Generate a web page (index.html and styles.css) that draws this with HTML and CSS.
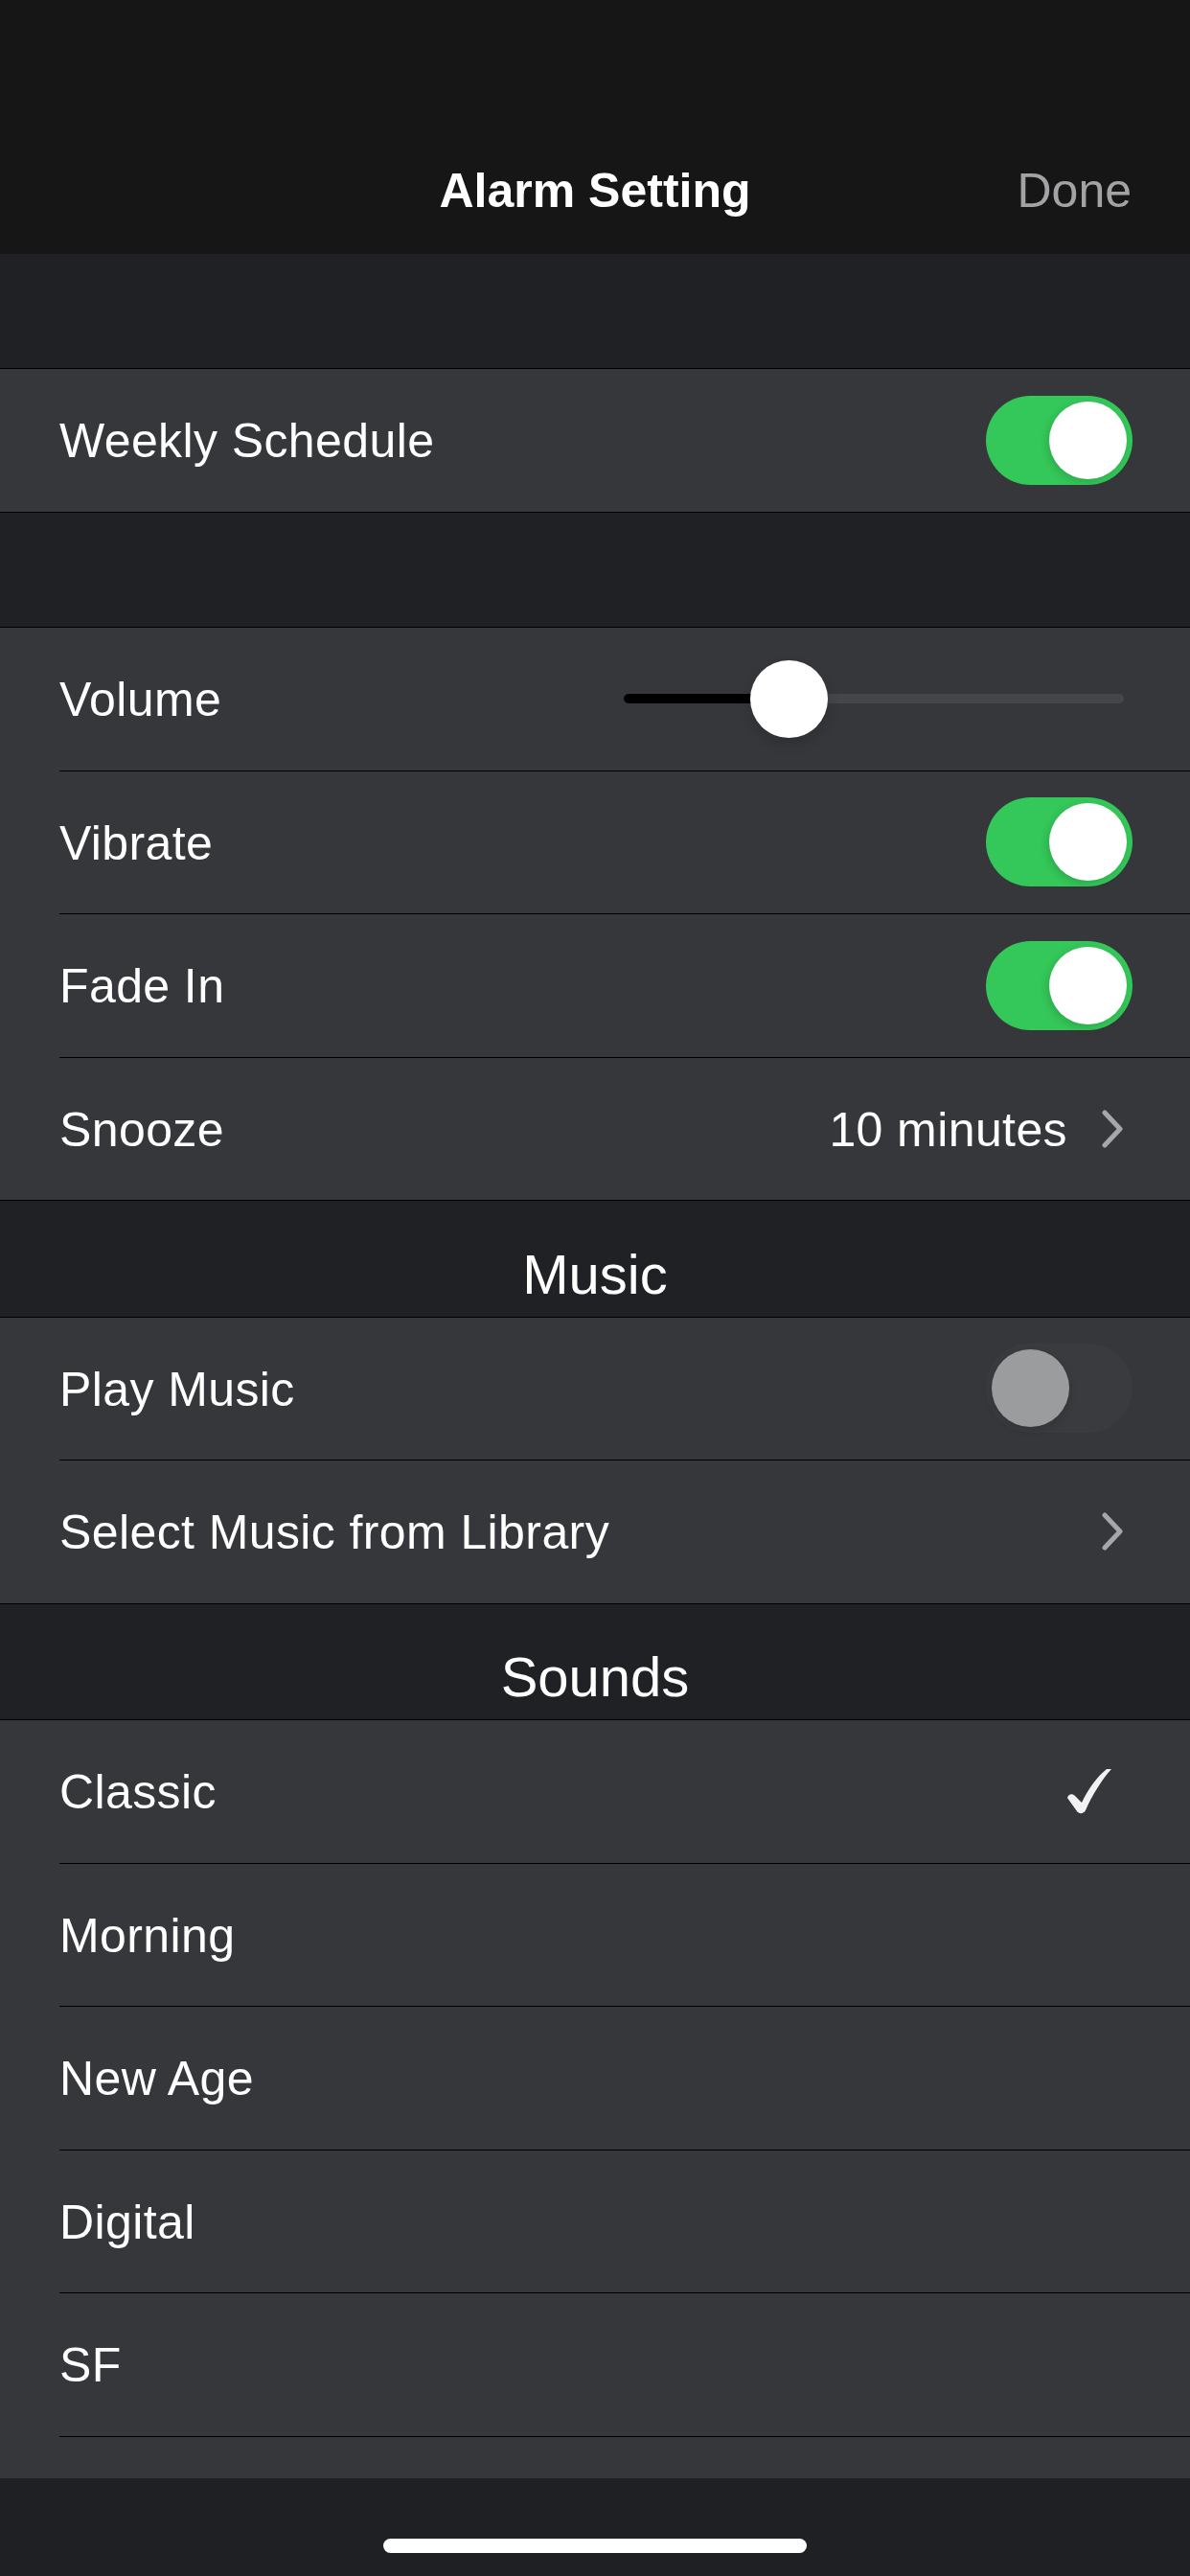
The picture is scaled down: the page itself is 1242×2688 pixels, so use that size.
FILE: index.html
```html
<!DOCTYPE html>
<html lang="en">
<head>
  <meta charset="UTF-8">
  <title>Alarm Setting</title>
  <meta name="viewport" content="width=device-width, initial-scale=1">
  <link rel="stylesheet" href="styles.css">
</head>
<body>
  <div class="screen">
    <header class="navbar">
      <div class="nav-content">
        <span></span>
        <span class="nav-title">Alarm Setting</span>
        <button class="nav-done">Done</button>
      </div>
    </header>

    <main class="content">
      <div class="spacer spacer-first"></div>
      <section class="group">
        <div class="row">
          <div class="row-inner">
            <span class="label">Weekly Schedule</span>
            <span class="switch on"></span>
          </div>
        </div>
      </section>

      <div class="spacer"></div>
      <section class="group">
        <div class="row">
          <div class="row-inner">
            <span class="label">Volume</span>
            <div class="slider">
              <div class="slider-track">
                <div class="slider-fill" style="width: 172px"></div>
              </div>
              <span class="slider-thumb" style="left: 132px"></span>
            </div>
          </div>
        </div>
        <div class="row">
          <div class="row-inner">
            <span class="label">Vibrate</span>
            <span class="switch on"></span>
          </div>
        </div>
        <div class="row">
          <div class="row-inner">
            <span class="label">Fade In</span>
            <span class="switch on"></span>
          </div>
        </div>
        <div class="row">
          <div class="row-inner">
            <span class="label">Snooze</span>
            <span class="detail">10 minutes</span>
            <svg class="chevron" viewBox="0 0 24 40" width="24" height="40">
              <polyline points="4,3 20,20 4,37" fill="none" stroke="#a6a7a9" stroke-width="5" stroke-linecap="round" stroke-linejoin="round"/>
            </svg>
          </div>
        </div>
      </section>

      <div class="section-header">Music</div>
      <section class="group">
        <div class="row">
          <div class="row-inner">
            <span class="label">Play Music</span>
            <span class="switch"></span>
          </div>
        </div>
        <div class="row">
          <div class="row-inner">
            <span class="label">Select Music from Library</span>
            <svg class="chevron" viewBox="0 0 24 40" width="24" height="40">
              <polyline points="4,3 20,20 4,37" fill="none" stroke="#a6a7a9" stroke-width="5" stroke-linecap="round" stroke-linejoin="round"/>
            </svg>
          </div>
        </div>
      </section>

      <div class="section-header">Sounds</div>
      <section class="group">
        <div class="row">
          <div class="row-inner">
            <span class="label">Classic</span>
            <svg class="check" viewBox="0 0 46 48" width="46" height="48">
              <path d="M0,31 C1,27 5,26 8,29 L15,36 C22,21 32,8 41,1 L46,1 C36,12 26,28 19,44 C17,48 12,48 10,45 Z" fill="#f2f2f2"/>
            </svg>
          </div>
        </div>
        <div class="row">
          <div class="row-inner"><span class="label">Morning</span></div>
        </div>
        <div class="row">
          <div class="row-inner"><span class="label">New Age</span></div>
        </div>
        <div class="row">
          <div class="row-inner"><span class="label">Digital</span></div>
        </div>
        <div class="row">
          <div class="row-inner"><span class="label">SF</span></div>
        </div>
        <div class="row">
          <div class="row-inner"></div>
        </div>
      </section>
    </main>

    <footer class="home-bar">
      <span class="home-indicator"></span>
    </footer>
  </div>
</body>
</html>
```

FILE: styles.css
```css
* {
  box-sizing: border-box;
}
html, body {
  margin: 0;
  padding: 0;
}
body {
  background: #202124;
  color: #fff;
  font-family: "Liberation Sans", Arial, sans-serif;
  font-size: 50px;
}
.screen {
  width: 1242px;
  height: 2688px;
  display: flex;
  flex-direction: column;
  overflow: hidden;
}

/* nav */
.navbar {
  background: #161617;
  padding-top: 132px;
  height: 265px;
  flex-shrink: 0;
}
.nav-content {
  height: 133px;
  display: grid;
  grid-template-columns: 1fr auto 1fr;
  align-items: center;
  padding: 0 61px;
}
.nav-title {
  font-weight: bold;
  font-size: 50px;
  line-height: 1;
}
.nav-done {
  justify-self: end;
  background: none;
  border: none;
  padding: 0;
  color: #a3a3a5;
  font-family: inherit;
  font-size: 50px;
  line-height: 1;
}

/* list */
.content {
  flex: 1;
  overflow: hidden;
}
.spacer {
  height: 119.5px;
}
.spacer-first {
  height: 119px;
}
.section-header {
  height: 120.5px;
  display: flex;
  align-items: flex-end;
  justify-content: center;
  padding-bottom: 15px;
  font-size: 58px;
  line-height: 1;
}
.group {
  background: #36373b;
  border-top: 1px solid #000;
  border-bottom: 1px solid #000;
}
.row {
  padding-left: 62px;
}
.row-inner {
  height: 148.5px;
  display: flex;
  align-items: center;
  padding-right: 60px;
}
.row + .row .row-inner {
  height: 149.5px;
  border-top: 1px solid #000;
}
.label {
  flex: 1;
  line-height: 1;
  letter-spacing: 0.4px;
  padding-top: 2px;
  white-space: nowrap;
}
.detail {
  line-height: 1;
  letter-spacing: 0.4px;
  padding-top: 2px;
  margin-right: 35px;
}
.chevron {
  display: block;
  margin-right: 9px;
}
.check {
  display: block;
  margin-right: 22px;
}

/* switch */
.switch {
  position: relative;
  width: 153px;
  height: 93px;
  border-radius: 47px;
  background: #3a3b3f;
  flex-shrink: 0;
}
.switch::after {
  content: "";
  position: absolute;
  top: 6px;
  left: 6px;
  width: 81px;
  height: 81px;
  border-radius: 50%;
  background: #9b9c9e;
  box-shadow: 0 4px 10px rgba(0, 0, 0, 0.12);
}
.switch.on {
  background: #34c759;
}
.switch.on::after {
  left: auto;
  right: 6px;
  background: #fff;
  box-shadow: -2px 3px 8px rgba(0, 0, 0, 0.15);
}

/* slider */
.slider {
  position: relative;
  width: 522px;
  height: 81px;
  margin-right: 9px;
  display: flex;
  align-items: center;
}
.slider-track {
  width: 100%;
  height: 10px;
  border-radius: 5px;
  background: #45464a;
}
.slider-fill {
  height: 100%;
  border-radius: 5px;
  background: #000;
}
.slider-thumb {
  position: absolute;
  top: 0;
  width: 81px;
  height: 81px;
  border-radius: 50%;
  background: #fff;
  box-shadow: 0 6px 14px rgba(0, 0, 0, 0.15);
}

/* home indicator */
.home-bar {
  height: 102px;
  flex-shrink: 0;
  background: #1f2023;
  display: flex;
  justify-content: center;
  padding-top: 63px;
}
.home-indicator {
  width: 442px;
  height: 15px;
  border-radius: 8px;
  background: #fff;
}
```
